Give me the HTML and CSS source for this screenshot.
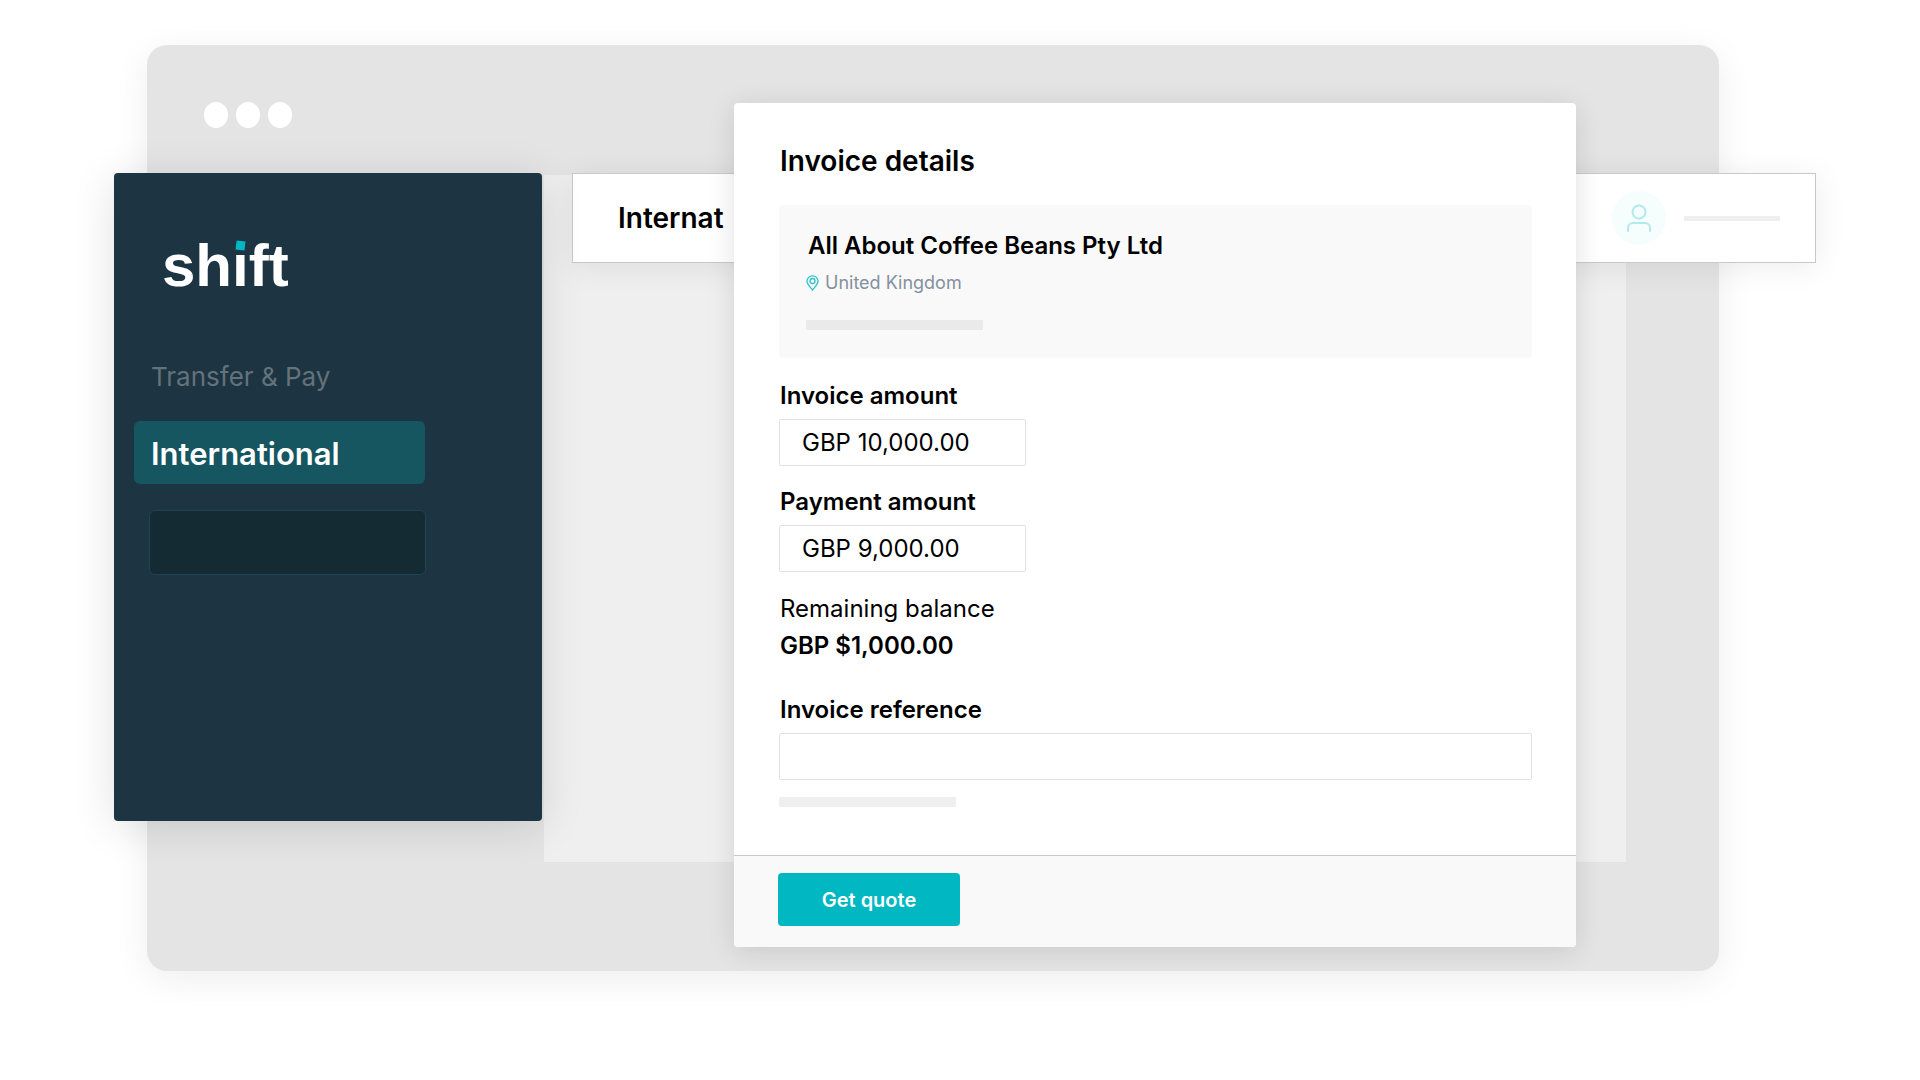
FILE: index.html
```html
<!DOCTYPE html>
<html lang="en">
  <head>
    <meta charset="UTF-8" />
    <meta name="viewport" content="width=device-width, initial-scale=1.0" />
    <title>Shift - International</title>
    <link rel="stylesheet" href="styles.css">
  </head>
  <body>
    <div class="scene">
      <div class="window">
        <span class="dot"></span>
        <span class="dot"></span>
        <span class="dot"></span>
      </div>
      <div class="content"></div>

      <header class="topbar">
        <h1>Internat</h1>
        <div class="user">
          <span class="avatar">
            <svg width="26" height="30" viewBox="0 0 26 30" fill="none" stroke="#b2e9ec" stroke-width="2" stroke-linecap="round">
              <circle cx="13" cy="9" r="6.5" />
              <path d="M2 28v-3a5 5 0 0 1 5-5h12a5 5 0 0 1 5 5v3" />
            </svg>
          </span>
          <span class="user-name"></span>
        </div>
      </header>

      <aside class="sidebar">
        <div class="logo">sh<span class="logo-i">ı</span>ft</div>
        <nav>
          <a href="#" class="nav-link">Transfer &amp; Pay</a>
          <a href="#" class="nav-link active">International</a>
          <a href="#" class="nav-link blank" aria-label="More"></a>
        </nav>
      </aside>

      <form class="card">
        <div class="card-body">
          <h2>Invoice details</h2>
          <div class="summary">
            <h3>All About Coffee Beans Pty Ltd</h3>
            <p class="place">
              <svg width="13" height="16" viewBox="0 0 13 16" fill="none" stroke="#2cc3cc" stroke-width="1.3">
                <path d="M6.500 15C4.500 12.300 1 9.300 1 6.200a5.500 5.400 0 0 1 11 0C12 9.300 8.500 12.300 6.500 15z" />
                <circle cx="6.500" cy="6" r="2.500" />
              </svg>
              United Kingdom
            </p>
            <div class="bar"></div>
          </div>

          <label for="invoice-amount">Invoice amount</label>
          <input type="text" id="invoice-amount" class="amount" value="GBP 10,000.00" />

          <label for="payment-amount">Payment amount</label>
          <input type="text" id="payment-amount" class="amount" value="GBP 9,000.00" />

          <p class="balance">Remaining balance</p>
          <p class="balance-value">GBP $1,000.00</p>

          <label for="invoice-reference">Invoice reference</label>
          <input type="text" id="invoice-reference" />
          <div class="bar"></div>
        </div>
        <div class="card-footer">
          <button type="submit">Get quote</button>
        </div>
      </form>
    </div>
  </body>
</html>
```
FILE: styles.css
```css
* {
    box-sizing: border-box;
}
body {
    font-family: Inter, "Liberation Sans", sans-serif;
    margin: 0;
    background-color: #fff;
    color: #000;
}
h1, h2, h3, p {
    margin: 0;
}

/* the panels overlap, so they all share one grid */
.scene {
    display: grid;
    grid-template-columns:
        minmax(0, 114fr) minmax(0, 33fr) minmax(0, 397fr) minmax(0, 28fr)
        minmax(0, 162fr) minmax(0, 842fr) minmax(0, 50fr) minmax(0, 93fr)
        minmax(0, 97fr) minmax(0, 104fr);
    grid-template-rows: 58px 70px 90px 558px 41px auto 24px;
    padding: 45px 0;
}
.window {
    grid-column: 3 / 9;
    grid-row: 1 / 8;
    display: flex;
    gap: 8px;
    padding: 57px;
    border-radius: 20px;
    background-color: #e4e4e4;
    box-shadow: 0 8px 36px rgba(0, 0, 0, 0.07);
}
.dot {
    width: 24px;
    height: 26px;
    border-radius: 50%;
    background-color: #fff;
}
.content {
    grid-column: 4 / 8;
    grid-row: 3 / 6;
    margin-top: 2px;
    background-color: #efefef;
}

.topbar {
    grid-column: 5 / 10;
    grid-row: 3;
    display: flex;
    justify-content: space-between;
    align-items: center;
    padding: 0 35px 0 45px;
    border: 1px solid #c8c9c9;
    background-color: #fff;
    box-shadow: 0 4px 32px rgba(0, 0, 0, 0.08);
}
h1, h2 {
    font-size: 28px;
    line-height: 32px;
    font-weight: 600;
}
.user {
    display: flex;
    align-items: center;
    gap: 18px;
}
.avatar {
    display: flex;
    justify-content: center;
    align-items: center;
    width: 54px;
    height: 54px;
    border-radius: 50%;
    background-color: #f6fdfd;
}
.user-name {
    width: 96px;
    height: 5px;
    border-radius: 1px;
    background-color: #efefef;
}

.sidebar {
    grid-column: 2 / 4;
    grid-row: 3 / 5;
    margin-right: 2px;
    padding: 58px 20px;
    border-radius: 4px;
    background-color: #1d3443;
    box-shadow: 0 6px 44px rgba(0, 0, 0, 0.12);
}
.logo {
    padding-left: 28px;
    color: #fff;
    font-family: "Liberation Sans", Arial, sans-serif;
    font-size: 60px;
    line-height: 70px;
    font-weight: 700;
}
.logo-i {
    position: relative;
}
.logo-i::before {
    content: "";
    position: absolute;
    top: 9px;
    left: 4px;
    width: 9px;
    height: 9px;
    background-color: #00b7c2;
    transform: rotate(7deg);
}
nav {
    display: flex;
    flex-direction: column;
    margin-top: 44px;
}
.nav-link {
    width: 75%;
    height: 63px;
    padding-left: 17px;
    border-radius: 6px;
    color: #64727a;
    font-size: 26px;
    line-height: 64px;
    text-decoration: none;
}
.active {
    margin: 13px 0 26px;
    background-color: #155660;
    color: #fff;
    font-size: 31px;
    line-height: 66px;
    font-weight: 600;
}
.blank {
    width: auto;
    height: 65px;
    margin: 0 96px 0 15px;
    border: 1px solid #1e4351;
    background-color: #142b33;
}

.card {
    grid-column: 6;
    grid-row: 2 / 7;
    display: flex;
    flex-direction: column;
    border-radius: 4px;
    background-color: #fff;
    box-shadow: 0 4px 28px rgba(0, 0, 0, 0.12);
}
.card-body {
    flex: 1;
    padding: 42px 44px 48px 45px;
}
h2 {
    padding-left: 1px;
}
.summary {
    margin: 28px 0 24px;
    padding: 25px 27px 28px;
    border-radius: 4px;
    background-color: #f9f9f9;
}
h3 {
    padding-left: 2px;
    font-size: 24px;
    line-height: 32px;
    font-weight: 600;
}
.place {
    display: flex;
    align-items: center;
    gap: 6px;
    margin: 9px 0 25px;
    color: #84909d;
    font-size: 18px;
    line-height: 24px;
}
.bar {
    width: 177px;
    height: 10px;
    border-radius: 1px;
    background-color: #eaeaea;
}
label, .balance, .balance-value {
    display: block;
    padding-left: 1px;
    font-size: 24px;
    line-height: 28px;
}
label {
    margin-bottom: 9px;
    font-weight: 600;
}
input {
    display: block;
    width: 100%;
    height: 47px;
    padding: 0 22px;
    border: 1px solid #e2e2e2;
    border-radius: 2px;
    background-color: #fff;
    color: #000;
    font-family: inherit;
    font-size: 24px;
}
.amount {
    width: 247px;
    margin-bottom: 22px;
}
.balance {
    margin-top: 23px;
}
.balance-value {
    margin: 9px 0 36px;
    font-weight: 600;
}
input + .bar {
    margin-top: 17px;
    background-color: #efefef;
}
.card-footer {
    padding: 17px 44px 21px;
    border-top: 1px solid #c9c9c9;
    border-radius: 0 0 4px 4px;
    background-color: #f9f9f9;
}
button {
    width: 182px;
    height: 53px;
    border: none;
    border-radius: 4px;
    background-color: #00b7c2;
    color: #fff;
    font-family: inherit;
    font-size: 20px;
    font-weight: 600;
}
```
